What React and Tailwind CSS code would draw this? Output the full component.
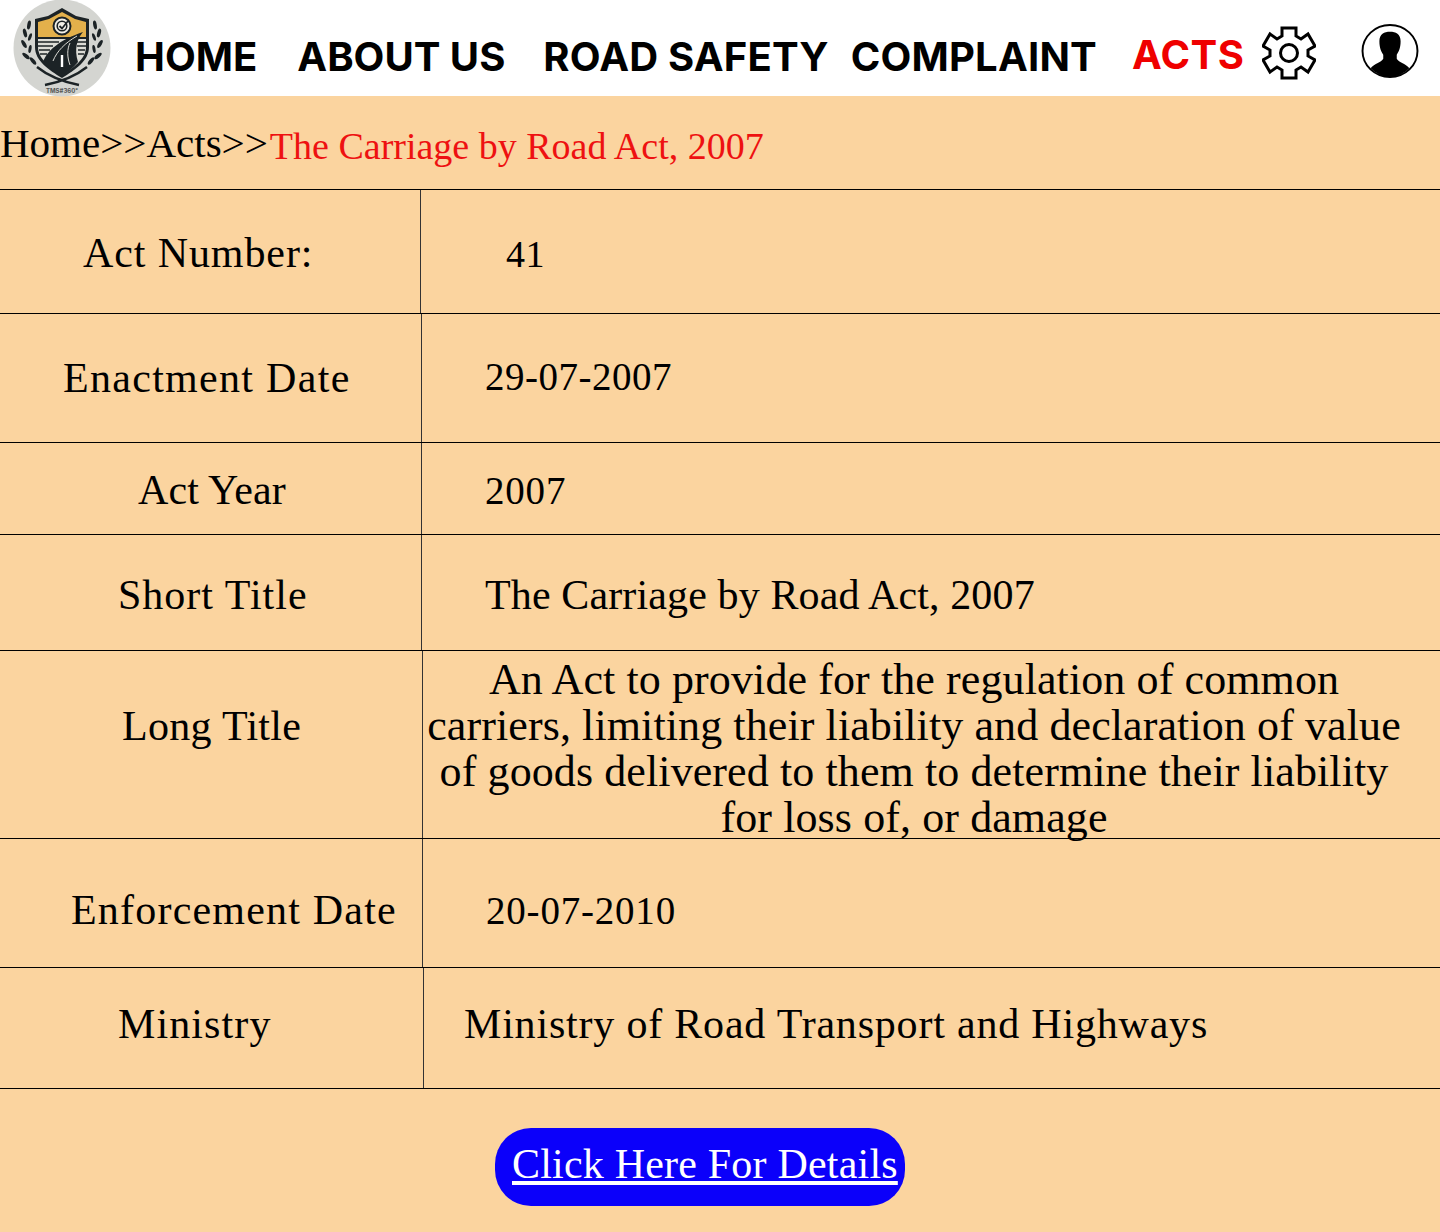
const rowsBefore = [
  { label: 'Act Number:', value: '41', h: 'h-[124px]', left: 'w-[421px] pl-[83px] pt-[4px] tracking-[0.9px]', right: 'pl-[85px] pt-[6px] text-[38px] tracking-[0.6px]' },
  { label: 'Enactment Date', value: '29-07-2007', h: 'h-[129px]', left: 'w-[422px] pl-[63px] tracking-[1.3px]', right: 'pl-[63px] pb-[2px] text-[39px] tracking-[0.5px]' },
  { label: 'Act Year', value: '2007', h: 'h-[92px]', left: 'w-[422px] pl-[138px] pt-[4px] tracking-[0.1px]', right: 'pl-[63px] pt-[6px] text-[39px] tracking-[0.8px]' },
  { label: 'Short Title', value: 'The Carriage by Road Act, 2007', h: 'h-[116px]', left: 'w-[422px] pl-[118px] pt-[6px] tracking-[1px]', right: 'pl-[63px] pt-[6px] text-[42px] tracking-[0.13px]' },
];

const rowsAfter = [
  { label: 'Enforcement Date', value: '20-07-2010', h: 'h-[129px]', left: 'w-[423px] pl-[71px] pt-[14px] tracking-[1.2px]', right: 'pl-[63px] pt-[16px] text-[39px] tracking-[0.8px]' },
  { label: 'Ministry', value: 'Ministry of Road Transport and Highways', h: 'h-[121px]', left: 'w-[424px] pl-[118px] pb-[8px] tracking-[1.1px]', right: 'pl-[40px] pb-[8px] text-[42px] tracking-[0.8px]' },
];

const longTitle = [
  'An Act to provide for the regulation of common',
  'carriers, limiting their liability and declaration of value',
  'of goods delivered to them to determine their liability',
  'for loss of, or damage',
];

function Logo() {
  return (
    <svg viewBox="0 0 98 98" className="w-[98px] h-[98px] shrink-0">
      <circle cx="49" cy="49" r="48.5" fill="#d4d5d1" />
      {/* shield */}
      <path d="M49 9 L63 17 L76 20 V48 C76 62 62 71 49 79 C36 71 22 62 22 48 V20 L35 17 Z" fill="#1c2326" />
      <path d="M25 23 L36 20 L49 13 L62 20 L73 23 V38 H25 Z" fill="#e3b04b" />
      <path d="M25 40 H73 V48 C73 60 60 69 49 76 C38 69 25 60 25 48 Z" fill="#dcdcd6" />
      <path d="M25 43 H46 M25 47 H40 M26 51 H37 M27 55 H34 M62 43 H73 M64 47 H73 M65 51 H72 M65 55 H71" stroke="#1c2326" strokeWidth="1.6" />
      {/* road */}
      <path d="M30 63 C34 52 46 41 70 33 C64 40 61 50 65 63 C60 69 55 73 49 77 C42 73 35 68 30 63 Z" fill="#1c2326" />
      <path d="M40 62 C44 52 52 44 64 37 M57 44 C54 50 54 58 57 66" stroke="#dcdcd6" strokeWidth="1" fill="none" />
      <path d="M49 56 V68" stroke="#fff" strokeWidth="2.4" />
      {/* check badge */}
      <circle cx="49" cy="27" r="8.5" fill="#f2f0e8" stroke="#1c2326" strokeWidth="2" />
      <circle cx="49" cy="27" r="4.8" fill="none" stroke="#1c2326" strokeWidth="1.6" />
      <path d="M46.5 27 L49 29.5 L55 22" fill="none" stroke="#1c2326" strokeWidth="1.8" />
      {/* laurels */}
      <g fill="#1c2326">
        <ellipse cx="16" cy="26" rx="1.8" ry="4.5" transform="rotate(10 16 26)" />
        <ellipse cx="12" cy="34" rx="1.8" ry="4.5" transform="rotate(-15 12 34)" />
        <ellipse cx="17" cy="38" rx="1.5" ry="4" transform="rotate(20 17 38)" />
        <ellipse cx="11" cy="45" rx="1.8" ry="4.5" transform="rotate(-30 11 45)" />
        <ellipse cx="17" cy="50" rx="1.5" ry="4" transform="rotate(10 17 50)" />
        <ellipse cx="13" cy="57" rx="1.8" ry="4.5" transform="rotate(-50 13 57)" />
        <ellipse cx="20" cy="62" rx="1.8" ry="4.5" transform="rotate(-40 20 62)" />
        <ellipse cx="82" cy="26" rx="1.8" ry="4.5" transform="rotate(-10 82 26)" />
        <ellipse cx="86" cy="34" rx="1.8" ry="4.5" transform="rotate(15 86 34)" />
        <ellipse cx="81" cy="38" rx="1.5" ry="4" transform="rotate(-20 81 38)" />
        <ellipse cx="87" cy="45" rx="1.8" ry="4.5" transform="rotate(30 87 45)" />
        <ellipse cx="81" cy="50" rx="1.5" ry="4" transform="rotate(-10 81 50)" />
        <ellipse cx="85" cy="57" rx="1.8" ry="4.5" transform="rotate(50 85 57)" />
        <ellipse cx="78" cy="62" rx="1.8" ry="4.5" transform="rotate(40 78 62)" />
      </g>
      <path d="M24 68 C34 76 46 82 66 86 M74 68 C64 76 52 82 32 86" stroke="#1c2326" strokeWidth="2.4" fill="none" />
      <text x="49" y="94" textAnchor="middle" fontSize="6" fill="#555" fontFamily="Inter, sans-serif">TMS#360°</text>
    </svg>
  );
}

function GearIcon() {
  return (
    <svg viewBox="0 0 54 54" className="w-[54px] h-[54px]" fill="none" stroke="black" strokeWidth="3" strokeLinejoin="miter">
      <path d="M20 2 H34 V10 L39 13 L46 8 L53 20 L46 24 V30 L53 34 L46 46 L39 41 L34 44 V52 H20 V44 L15 41 L8 46 L1 34 L8 30 V24 L1 20 L8 8 L15 13 L20 10 Z" />
      <circle cx="27" cy="27" r="8.5" />
    </svg>
  );
}

function UserIcon() {
  return (
    <svg viewBox="0 0 60 56" className="w-[58px] h-[54px]">
      <ellipse cx="30" cy="28" rx="28.5" ry="27" fill="white" stroke="black" strokeWidth="2" />
      <path d="M19 18 C19 10 24 8 30 8 C36 8 41 10 41 18 C41 25 39 29 37 32 V36 C39 40 47 41 50 46 C45 51 38 55 30 55 C22 55 15 51 10 46 C13 41 21 40 23 36 V32 C21 29 19 25 19 18 Z" fill="black" />
    </svg>
  );
}

function Row({ row }) {
  return (
    <div className={`flex border-b border-black ${row.h}`}>
      <div className={`flex items-center border-r border-[#333] text-[42px] ${row.left}`}>{row.label}</div>
      <div className={`flex items-center ${row.right}`}>{row.value}</div>
    </div>
  );
}

export default function App() {
  return (
    <div className="w-[1440px] h-[1232px] overflow-hidden bg-[#fbd49f] text-black font-['Liberation_Serif',serif]">
      <header className="flex items-center h-24 bg-white pl-[13px] font-['Inter',sans-serif] font-bold text-[40px]">
        <Logo />
        <nav className="flex items-center ml-6 mt-[17px]">
          <span>HOME</span>
          <span className="ml-10">ABOUT US</span>
          <span className="ml-[38px] tracking-[0.2px]">ROAD SAFETY</span>
          <span className="ml-[22px] tracking-[0.2px]">COMPLAINT</span>
          <span className="ml-[35px] -mt-1 text-[#ef0000] tracking-[0.4px]">ACTS</span>
        </nav>
        <div className="ml-[18px] mt-[10px]"><GearIcon /></div>
        <div className="ml-[45px] mt-[5px]"><UserIcon /></div>
      </header>

      <div className="flex items-center h-[94px] border-b border-black text-[41px] pt-[3px]">
        <span>Home&gt;&gt;Acts&gt;&gt;</span>
        <span className="ml-[2px] text-[#ee1111] text-[38px] mt-[5px]">The Carriage by Road Act, 2007</span>
      </div>

      {rowsBefore.map((row) => <Row key={row.label} row={row} />)}

      <div className="flex h-[188px] border-b border-black">
        <div className="flex items-center w-[423px] pl-[122px] pb-[36px] border-r border-[#333] text-[42px] tracking-[0.3px]">Long Title</div>
        <div className="flex flex-col items-center w-[982px] pt-[6px] text-[44px] leading-[46px] tracking-[0.1px]">
          {longTitle.map((line) => <span key={line} className="whitespace-nowrap">{line}</span>)}
        </div>
      </div>

      {rowsAfter.map((row) => <Row key={row.label} row={row} />)}

      <div className="flex justify-center pt-[39px] pr-10">
        <a href="#" className="flex items-center h-[78px] w-[410px] pl-[17px] pb-[6px] rounded-[36px] bg-[#0b00fa] text-white underline text-[42px] tracking-[0.2px]">Click Here For Details</a>
      </div>
    </div>
  );
}
